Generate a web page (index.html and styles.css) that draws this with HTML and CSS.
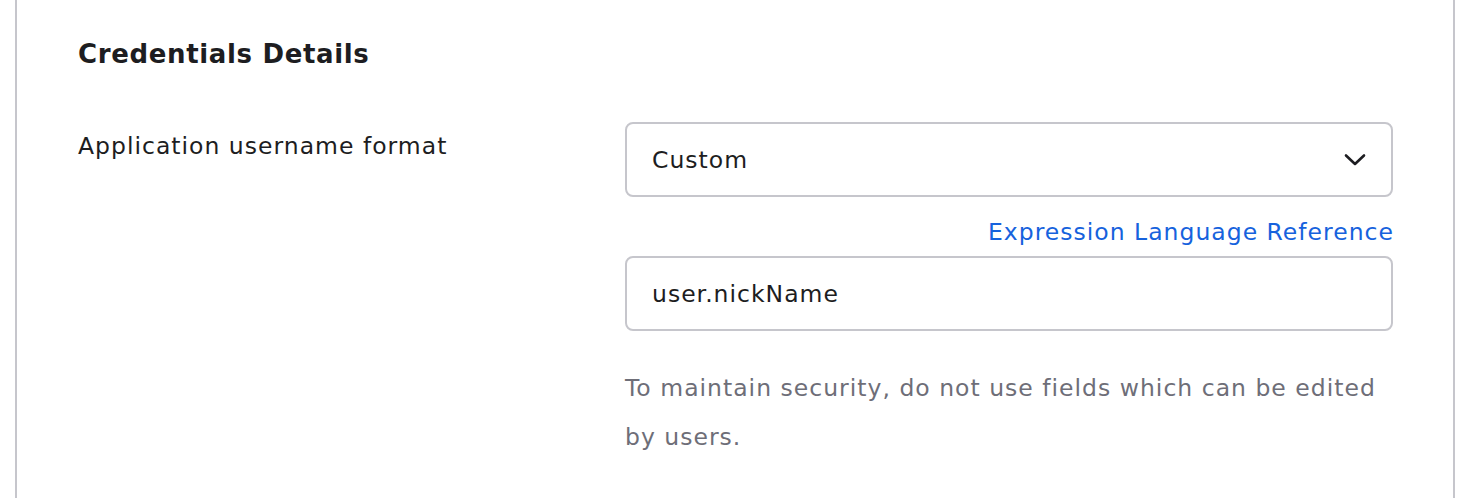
FILE: index.html
```html
<!DOCTYPE html>
<html lang="en">
<head>
<meta charset="utf-8">
<title>Credentials Details</title>
<link rel="stylesheet" href="styles.css">
</head>
<body>
<div class="page">
  <section class="panel">
    <h2 class="panel-title">Credentials Details</h2>
    <div class="form-row">
      <label class="form-label" for="fmt">Application username format</label>
      <div class="form-field">
        <div class="select">
          <span class="select-value" id="fmt">Custom</span>
          <svg class="chevron" width="22" height="14" viewBox="0 0 22 14" aria-hidden="true">
            <path d="M2 2.5 L11 11 L20 2.5" fill="none" stroke="#1d1d21" stroke-width="2.6" stroke-linecap="round" stroke-linejoin="round"/>
          </svg>
        </div>
        <div class="link-row"><a class="link" href="#">Expression Language Reference</a></div>
        <div class="input">user.nickName</div>
        <p class="help">To maintain security, do not use fields which can be edited by users.</p>
      </div>
    </div>
  </section>
</div>
</body>
</html>
```

FILE: styles.css
```css
* { box-sizing: border-box; }
html, body { margin: 0; padding: 0; background: #ffffff; }
body {
  font-family: "DejaVu Sans", Inter, "Liberation Sans", sans-serif;
  color: #1d1d21;
  letter-spacing: 0.063em;
}
.page {
  padding: 0 27px 0 15px;
}
.panel {
  border-left: 2px solid #c6c6cc;
  border-right: 2px solid #c6c6cc;
  padding: 32px 60px 40px 61px;
  min-height: 498px;
}
.panel-title {
  margin: 0;
  font-size: 26px;
  font-weight: 700;
  line-height: 44px;
  letter-spacing: 0.025em;
}
.form-row {
  display: flex;
  margin-top: 46px;
}
.form-label {
  flex: 0 0 547px;
  font-size: 23.5px;
  line-height: 40px;
  padding-top: 4px;
}
.form-field {
  flex: 1 1 auto;
  display: flex;
  flex-direction: column;
}
.select, .input {
  height: 75px;
  border: 2px solid #c6c6cc;
  border-radius: 8px;
  font-size: 23.5px;
  display: flex;
  align-items: center;
  padding: 0 25px 0 25px;
}
.select { justify-content: space-between; }
.chevron { display: block; }
.link-row {
  display: flex;
  justify-content: flex-end;
  height: 59px;
  align-items: center;
  padding-top: 10px;
}
.link {
  color: #1662dd;
  text-decoration: none;
  font-size: 23.5px;
  margin-right: -1px;
}
.help {
  margin: 33px 0 0;
  color: #6e6e78;
  font-size: 23.5px;
  line-height: 49px;
}
```
